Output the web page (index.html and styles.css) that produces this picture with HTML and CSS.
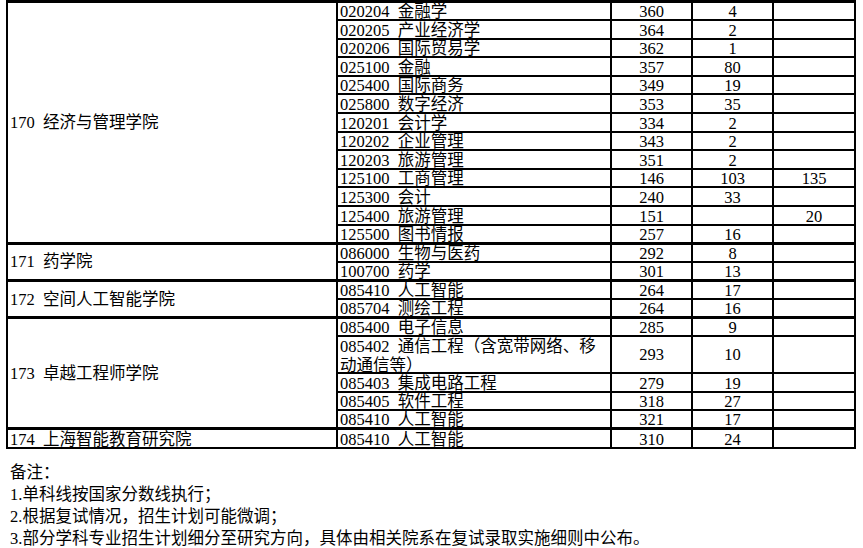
FILE: index.html
```html
<!DOCTYPE html>
<html lang="zh-CN">
<head>
<meta charset="utf-8">
<title>复试分数线</title>
<link rel="stylesheet" href="styles.css">
</head>
<body>
<table class="grid">
  <colgroup>
    <col class="c-college">
    <col class="c-major">
    <col class="c-num">
    <col class="c-num">
    <col class="c-last">
  </colgroup>
  <tbody>
    <tr class="row group-start">
      <td class="college" rowspan="13">170 经济与管理学院</td>
      <td class="major">020204 金融学</td><td class="num">360</td><td class="num">4</td><td class="num"></td>
    </tr>
    <tr class="row"><td class="major">020205 产业经济学</td><td class="num">364</td><td class="num">2</td><td class="num"></td></tr>
    <tr class="row"><td class="major">020206 国际贸易学</td><td class="num">362</td><td class="num">1</td><td class="num"></td></tr>
    <tr class="row"><td class="major">025100 金融</td><td class="num">357</td><td class="num">80</td><td class="num"></td></tr>
    <tr class="row"><td class="major">025400 国际商务</td><td class="num">349</td><td class="num">19</td><td class="num"></td></tr>
    <tr class="row"><td class="major">025800 数字经济</td><td class="num">353</td><td class="num">35</td><td class="num"></td></tr>
    <tr class="row"><td class="major">120201 会计学</td><td class="num">334</td><td class="num">2</td><td class="num"></td></tr>
    <tr class="row"><td class="major">120202 企业管理</td><td class="num">343</td><td class="num">2</td><td class="num"></td></tr>
    <tr class="row"><td class="major">120203 旅游管理</td><td class="num">351</td><td class="num">2</td><td class="num"></td></tr>
    <tr class="row"><td class="major">125100 工商管理</td><td class="num">146</td><td class="num">103</td><td class="num">135</td></tr>
    <tr class="row"><td class="major">125300 会计</td><td class="num">240</td><td class="num">33</td><td class="num"></td></tr>
    <tr class="row"><td class="major">125400 旅游管理</td><td class="num">151</td><td class="num"></td><td class="num">20</td></tr>
    <tr class="row"><td class="major">125500 图书情报</td><td class="num">257</td><td class="num">16</td><td class="num"></td></tr>

    <tr class="row group-start">
      <td class="college" rowspan="2">171 药学院</td>
      <td class="major">086000 生物与医药</td><td class="num">292</td><td class="num">8</td><td class="num"></td>
    </tr>
    <tr class="row"><td class="major">100700 药学</td><td class="num">301</td><td class="num">13</td><td class="num"></td></tr>

    <tr class="row group-start">
      <td class="college" rowspan="2">172 空间人工智能学院</td>
      <td class="major">085410 人工智能</td><td class="num">264</td><td class="num">17</td><td class="num"></td>
    </tr>
    <tr class="row"><td class="major">085704 测绘工程</td><td class="num">264</td><td class="num">16</td><td class="num"></td></tr>

    <tr class="row group-start">
      <td class="college" rowspan="5">173 卓越工程师学院</td>
      <td class="major">085400 电子信息</td><td class="num">285</td><td class="num">9</td><td class="num"></td>
    </tr>
    <tr class="row tall"><td class="major wrap"><div class="wrap-text">085402 通信工程（含宽带网络、移动通信等）</div></td><td class="num">293</td><td class="num">10</td><td class="num"></td></tr>
    <tr class="row"><td class="major">085403 集成电路工程</td><td class="num">279</td><td class="num">19</td><td class="num"></td></tr>
    <tr class="row"><td class="major">085405 软件工程</td><td class="num">318</td><td class="num">27</td><td class="num"></td></tr>
    <tr class="row"><td class="major">085410 人工智能</td><td class="num">321</td><td class="num">17</td><td class="num"></td></tr>

    <tr class="row group-start">
      <td class="college college-low">174 上海智能教育研究院</td>
      <td class="major">085410 人工智能</td><td class="num">310</td><td class="num">24</td><td class="num"></td>
    </tr>
  </tbody>
</table>

<div class="notes">
  <p class="note">备注：</p>
  <p class="note">1.单科线按国家分数线执行；</p>
  <p class="note">2.根据复试情况，招生计划可能微调；</p>
  <p class="note">3.部分学科专业招生计划细分至研究方向，具体由相关院系在复试录取实施细则中公布。</p>
</div>
</body>
</html>
```

FILE: styles.css
```css
html, body {
  margin: 0;
  padding: 0;
  background: #ffffff;
}

body {
  font-family: "Liberation Serif", "Noto Sans CJK SC", serif;
  font-size: 16.5px;
  color: #000000;
}

.grid {
  border-collapse: collapse;
  table-layout: fixed;
  width: 848px;
  margin-left: 6px;
  border: 2px solid #000;
}

.c-college { width: 330px; }
.c-major { width: 274px; }
.c-num { width: 81px; }
.c-last { width: 82px; }

.grid td {
  border: 2px solid #000;
  padding: 0 2px;
  line-height: 15px;
  white-space: nowrap;
  overflow: hidden;
  word-spacing: 4px;
}

.row {
  height: 18.6px;
}

.row.tall {
  height: 37px;
}

.group-start td {
  border-top-width: 3px;
}

.college {
  vertical-align: middle;
  padding-left: 3px;
}

.college-low {
  vertical-align: bottom;
}

.major {
  vertical-align: bottom;
  padding-left: 2px;
}

.grid td.wrap {
  white-space: normal;
  vertical-align: middle;
  overflow: visible;
}

.wrap-text {
  line-height: 19.5px;
  height: 34px;
  margin-top: -2px;
}

.num {
  text-align: center;
  vertical-align: bottom;
}

.tall .num {
  vertical-align: middle;
}

.notes {
  margin-top: 13px;
  padding-left: 10px;
}

.note {
  margin: 0;
  line-height: 22px;
  white-space: nowrap;
}
```
